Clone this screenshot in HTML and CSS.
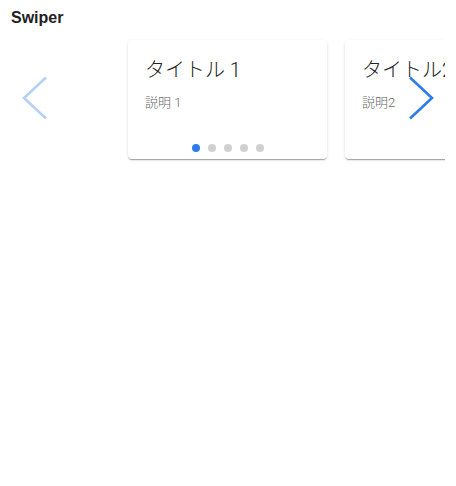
FILE: index.html
```html
<!DOCTYPE html>
<html lang="ja">
<head>
<meta charset="utf-8">
<title>Swiper</title>
<link rel="stylesheet" href="styles.css">
</head>
<body>
<h1 class="heading">Swiper</h1>
<div class="slider">
  <div class="viewport">
    <div class="swiper">
      <div class="track">
        <div class="card">
          <div class="card-title">タイトル 1</div>
          <div class="card-desc">説明 1</div>
        </div>
        <div class="card">
          <div class="card-title">タイトル2</div>
          <div class="card-desc">説明2</div>
        </div>
      </div>
      <div class="pagination">
        <span class="dot active"></span>
        <span class="dot"></span>
        <span class="dot"></span>
        <span class="dot"></span>
        <span class="dot"></span>
      </div>
    </div>
  </div>
  <button class="nav nav-prev disabled" aria-label="前へ">
    <svg width="26" height="44" viewBox="0 0 26 44"><polyline points="24,1.5 2,22 24,42.5" fill="none" stroke="currentColor" stroke-width="2.6"/></svg>
  </button>
  <button class="nav nav-next" aria-label="次へ">
    <svg width="26" height="44" viewBox="0 0 26 44"><polyline points="2,1.5 24,22 2,42.5" fill="none" stroke="currentColor" stroke-width="2.6"/></svg>
  </button>
</div>
</body>
</html>
```
FILE: styles.css
```css
html, body {
  margin: 0;
  padding: 0;
  background: #ffffff;
}
body {
  font-family: Roboto, "Noto Sans CJK JP", sans-serif;
  color: #222;
}
.heading {
  margin: 0;
  padding: 8px 11px 0;
  font-family: "Liberation Sans", Arial, sans-serif;
  font-size: 16px;
  font-weight: bold;
  line-height: 20px;
  color: #222;
}
.slider {
  position: relative;
  margin: 10px 11px 0;
  width: 434px;
}
.viewport {
  overflow: hidden;
  padding: 2px 0 4px;
}
.swiper {
  position: relative;
  width: 199px;
  margin-left: 117px;
}
.track {
  display: flex;
  gap: 18px;
}
.card {
  flex: 0 0 199px;
  box-sizing: border-box;
  height: 119px;
  padding: 16px 17px 0;
  background: #fff;
  border-radius: 4px;
  box-shadow: 0 2px 1px -1px rgba(0,0,0,0.2), 0 1px 1px 0 rgba(0,0,0,0.14), 0 1px 3px 0 rgba(0,0,0,0.12);
  overflow: hidden;
}
.card-title {
  font-size: 20px;
  font-weight: 300;
  line-height: 28px;
  color: #222;
  white-space: nowrap;
}
.card-desc {
  margin-top: 10px;
  font-size: 13px;
  font-weight: 300;
  line-height: 18px;
  color: #666;
}
.pagination {
  position: absolute;
  left: 0;
  right: 0;
  bottom: 7px;
  display: flex;
  justify-content: center;
  gap: 8px;
}
.dot {
  width: 8px;
  height: 8px;
  border-radius: 50%;
  background: #d0d0d0;
}
.dot.active {
  background: #2b7de9;
}
.nav {
  position: absolute;
  top: 38px;
  padding: 0;
  border: 0;
  background: none;
  color: #2b7de9;
  width: 26px;
  height: 44px;
  cursor: pointer;
}
.nav svg { display: block; }
.nav.disabled { opacity: 0.35; }
.nav-prev { left: 11px; }
.nav-next { left: 397px; }
```
